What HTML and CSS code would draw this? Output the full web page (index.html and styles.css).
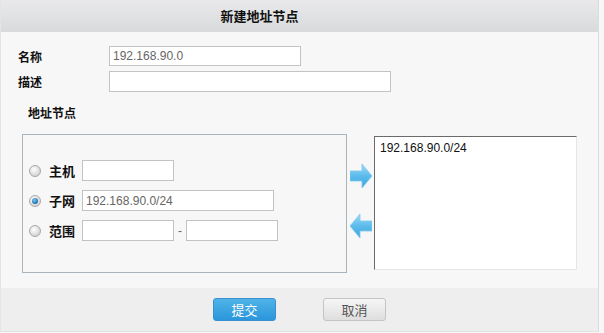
FILE: index.html
```html
<!DOCTYPE html>
<html lang="zh-CN">
<head>
    <meta charset="UTF-8">
    <title>新建地址节点</title>
    <link rel="stylesheet" href="styles.css">
</head>
<body>
    <div class="dialog">
        <div class="dialog-title">新建地址节点</div>

        <div class="dialog-body">
            <!-- 基本信息 -->
            <div class="form-row">
                <label class="form-label">名称</label>
                <input type="text" class="text-input name-input" value="192.168.90.0">
            </div>
            <div class="form-row">
                <label class="form-label">描述</label>
                <input type="text" class="text-input desc-input" value="">
            </div>

            <div class="section-title">地址节点</div>

            <div class="node-area">
                <div class="node-box">
                    <div class="node-row">
                        <span class="radio"></span>
                        <span class="node-label">主机</span>
                        <input type="text" class="text-input short-input" value="">
                    </div>
                    <div class="node-row">
                        <span class="radio checked"></span>
                        <span class="node-label">子网</span>
                        <input type="text" class="text-input long-input" value="192.168.90.0/24">
                    </div>
                    <div class="node-row">
                        <span class="radio"></span>
                        <span class="node-label">范围</span>
                        <input type="text" class="text-input short-input" value="">
                        <span class="range-dash">-</span>
                        <input type="text" class="text-input short-input" value="">
                    </div>
                </div>

                <div class="arrows">
                    <svg class="arrow" width="22" height="24" viewBox="0 0 22 24">
                        <defs>
                            <linearGradient id="ar" x1="0" y1="0" x2="0" y2="1">
                                <stop offset="0" stop-color="#9fdcf7"/>
                                <stop offset="0.5" stop-color="#5bbbeb"/>
                                <stop offset="1" stop-color="#3fa6e0"/>
                            </linearGradient>
                        </defs>
                        <path d="M0 7 H12 V0 L22 12 L12 24 V17 H0 Z" fill="url(#ar)" stroke="#7fc8ec" stroke-width="0.8"/>
                    </svg>
                    <svg class="arrow" width="22" height="24" viewBox="0 0 22 24">
                        <path d="M22 7 H10 V0 L0 12 L10 24 V17 H22 Z" fill="url(#ar)" stroke="#7fc8ec" stroke-width="0.8"/>
                    </svg>
                </div>

                <div class="node-list">
                    <div class="node-item">192.168.90.0/24</div>
                </div>
            </div>
        </div>

        <div class="dialog-footer">
            <button class="btn btn-primary">提交</button>
            <button class="btn btn-default">取消</button>
        </div>
    </div>
</body>
</html>
```

FILE: styles.css
```css
body {
    margin: 0;
    background-color: #f7f7f7;
    font-family: "Noto Sans CJK SC", "Liberation Sans", sans-serif;
    font-size: 12px;
    color: #222;
}
.dialog {
    width: 597px;
    height: 331px;
    border-left: 1px solid #e4e4e4;
    border-right: 1px solid #dcdcdc;
    border-bottom: 1px solid #e2e2e2;
    display: flex;
    flex-direction: column;
}
.dialog-title {
    height: 32px;
    line-height: 31px;
    padding-right: 80px;
    text-align: center;
    font-weight: bold;
    font-size: 13px;
    color: #111;
    background: linear-gradient(#e9e9eb, #d9dadc);
}
.dialog-body {
    height: 256px;
    padding: 14px 0 0 17px;
    box-sizing: border-box;
    background-color: #f7f7f7;
}
.form-row {
    display: flex;
    align-items: center;
    margin-bottom: 5px;
}
.form-label {
    width: 91px;
    font-weight: bold;
    color: #111;
}
.text-input {
    box-sizing: border-box;
    height: 21px;
    margin: 0;
    padding: 0 3px;
    border: 1px solid #c3c3c3;
    background: #fff;
    font-family: "Liberation Sans", Arial, sans-serif;
    font-size: 12px;
    color: #666;
    outline: none;
}
.name-input {
    width: 192px;
    height: 20px;
}
.desc-input {
    width: 282px;
}
.section-title {
    margin: 12px 0 0 10px;
    height: 18px;
    line-height: 18px;
    font-weight: bold;
    color: #111;
}
.node-area {
    display: flex;
    align-items: flex-start;
    margin-top: 12px;
    margin-left: 4px;
}
.node-box {
    width: 325px;
    height: 139px;
    box-sizing: border-box;
    border: 1px solid #a9b4bd;
    padding: 25px 0 0 6px;
}
.node-row {
    display: flex;
    align-items: center;
    height: 21px;
    margin-bottom: 9px;
}
.radio {
    width: 12px;
    height: 12px;
    box-sizing: border-box;
    border-radius: 50%;
    border: 1px solid #a8a8a8;
    background: radial-gradient(circle at 40% 35%, #ffffff, #d6d6d6 70%, #bdbdbd);
    position: relative;
}
.radio.checked::after {
    content: "";
    position: absolute;
    left: 2px;
    top: 2px;
    width: 6px;
    height: 6px;
    border-radius: 50%;
    background: radial-gradient(circle at 40% 35%, #7ccaf0, #1a6fb0 70%, #0e4f86);
}
.node-label {
    width: 33px;
    margin-left: 8px;
    font-weight: bold;
    font-size: 13px;
    color: #111;
}
.short-input {
    width: 92px;
}
.long-input {
    width: 192px;
}
.range-dash {
    width: 12px;
    text-align: center;
    color: #666;
    font-family: "Liberation Sans", Arial, sans-serif;
}
.arrows {
    width: 27px;
    padding: 30px 0 0 3px;
    box-sizing: border-box;
    display: flex;
    flex-direction: column;
    gap: 26px;
}
.arrow {
    display: block;
}
.node-list {
    width: 203px;
    height: 134px;
    margin-top: 2px;
    box-sizing: border-box;
    border-top: 1px solid #6b6b6b;
    border-left: 1px solid #6b6b6b;
    border-right: 1px solid #e6e6e6;
    border-bottom: 1px solid #e6e6e6;
    background: #fff;
    padding: 4px 5px;
}
.node-item {
    font-family: "Liberation Sans", Arial, sans-serif;
    font-size: 12px;
    color: #111;
}
.dialog-footer {
    flex: 1;
    background-color: #eeeeee;
    display: flex;
    justify-content: center;
    align-items: flex-start;
    gap: 47px;
    padding-top: 10px;
    box-sizing: border-box;
}
.btn {
    width: 63px;
    height: 23px;
    border-radius: 3px;
    font-family: "Noto Sans CJK SC", sans-serif;
    font-size: 13px;
    padding: 0;
    cursor: pointer;
}
.btn-primary {
    border: 1px solid #3a8fd1;
    background: linear-gradient(#4fb3e8, #2b96db);
    color: #fff;
}
.btn-default {
    border: 1px solid #c4c4c4;
    background: linear-gradient(#f6f6f6, #dedede);
    color: #555;
}
```
